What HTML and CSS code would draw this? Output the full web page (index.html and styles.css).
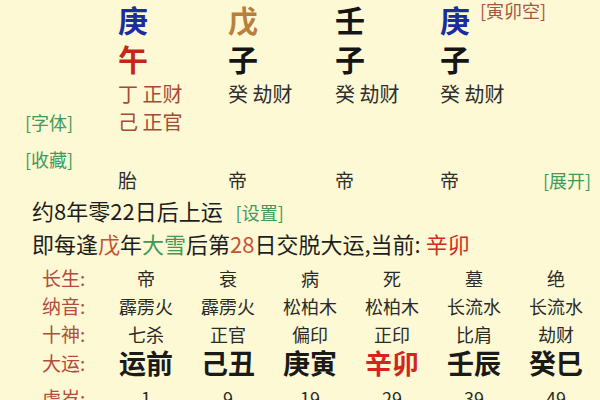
FILE: index.html
```html
<!DOCTYPE html>
<html lang="zh">
<head>
<meta charset="utf-8">
<link rel="stylesheet" href="styles.css">
</head>
<body>
<div class="page">
  <div class="pillars">
    <div class="row stems">
      <div class="side"></div>
      <div class="c blue">庚</div>
      <div class="c ochre">戊</div>
      <div class="c dark">壬</div>
      <div class="c blue">庚<span class="kong">[寅卯空]</span></div>
    </div>
    <div class="row branches">
      <div class="side"></div>
      <div class="c red">午</div>
      <div class="c dark">子</div>
      <div class="c dark">子</div>
      <div class="c dark">子</div>
    </div>
    <div class="row hid1">
      <div class="side"></div>
      <div class="c rust">丁 正财</div>
      <div class="c gray">癸 劫财</div>
      <div class="c gray">癸 劫财</div>
      <div class="c gray">癸 劫财</div>
    </div>
    <div class="row hid2">
      <div class="side link">[字体]</div>
      <div class="c rust">己 正官</div>
    </div>
    <div class="row fav">
      <div class="side link">[收藏]</div>
    </div>
    <div class="row stage">
      <div class="side"></div>
      <div class="c gray">胎</div>
      <div class="c gray">帝</div>
      <div class="c gray">帝</div>
      <div class="c gray">帝</div>
      <div class="c link">[展开]</div>
    </div>
  </div>

  <p class="info first">约8年零22日后上运 <span class="link set">[设置]</span></p>
  <p class="info second">即每逢<span class="orange">戊</span>年<span class="green">大雪</span>后第<span class="orange">28</span>日交脱大运,当前: <span class="cur">辛卯</span></p>

  <div class="table">
    <div class="t-row">
      <div class="lbl">长生:</div>
      <div class="v">帝</div><div class="v">衰</div><div class="v">病</div><div class="v">死</div><div class="v">墓</div><div class="v">绝</div>
    </div>
    <div class="t-row">
      <div class="lbl">纳音:</div>
      <div class="v">霹雳火</div><div class="v">霹雳火</div><div class="v">松柏木</div><div class="v">松柏木</div><div class="v">长流水</div><div class="v">长流水</div>
    </div>
    <div class="t-row">
      <div class="lbl">十神:</div>
      <div class="v">七杀</div><div class="v">正官</div><div class="v">偏印</div><div class="v">正印</div><div class="v">比肩</div><div class="v">劫财</div>
    </div>
    <div class="t-row luck">
      <div class="lbl">大运:</div>
      <div class="v big">运前</div><div class="v big">己丑</div><div class="v big">庚寅</div><div class="v big now">辛卯</div><div class="v big">壬辰</div><div class="v big">癸巳</div>
    </div>
    <div class="t-row age">
      <div class="lbl">虚岁:</div>
      <div class="v">1</div><div class="v">9</div><div class="v">19</div><div class="v">29</div><div class="v">39</div><div class="v">49</div>
    </div>
  </div>
</div>
</body>
</html>
```

FILE: styles.css
```css
html, body {
  margin: 0;
  padding: 0;
  background: #fdf9d4;
}

body {
  font-family: "Noto Sans CJK SC", "Noto Sans", sans-serif;
  color: #222;
  width: 600px;
  height: 400px;
  overflow: hidden;
}

.page {
  position: relative;
}

.row {
  display: grid;
  grid-template-columns: 118px 110px 107px 105px 103px 1fr;
  white-space: nowrap;
}

.side {
  padding-left: 25px;
}

.link {
  color: #3f9a5c;
  font-size: 18px;
}

.stems {
  font-size: 30px;
  line-height: 38px;
  font-weight: 700;
}

.branches {
  font-size: 30px;
  line-height: 39px;
  font-weight: 700;
  padding-top: 1px;
}

.kong {
  font-size: 18px;
  line-height: 20px;
  vertical-align: top;
  color: #a9543f;
  margin-left: 10px;
  font-weight: 400;
}

.blue { color: #1b2d9e; }
.ochre { color: #b7803c; }
.dark { color: #151515; }
.red { color: #c5261b; }
.rust { color: #a64a36; }
.gray { color: #2e2e2e; }

.hid1 {
  font-size: 20px;
  line-height: 32px;
}

.hid2 {
  font-size: 20px;
  line-height: 24px;
}

.hid2 .side {
  font-size: 18px;
}

.fav {
  padding-top: 14px;
  line-height: 22px;
}

.stage {
  font-size: 19px;
  line-height: 20px;
}

.stage .link {
  font-size: 18px;
}

.info {
  margin: 0;
  padding-left: 32px;
  font-size: 22px;
  line-height: 24px;
  color: #1e1e1e;
  white-space: nowrap;
}

.first {
  margin-top: 8px;
}

.second {
  margin-top: 7px;
}

.set {
  margin-left: 8px;
  font-size: 18px;
}

.orange { color: #c65234; }
.green { color: #3d9a55; }
.cur { color: #d12c20; }

.table {
  margin-top: 9px;
  padding-left: 42px;
}

.t-row {
  display: grid;
  grid-template-columns: 63px repeat(6, 82px);
  line-height: 28px;
  font-size: 18px;
  white-space: nowrap;
}

.lbl {
  color: #b24c3c;
  font-size: 19px;
}

.v {
  text-align: center;
  color: #2a2a2a;
}

.luck {
  line-height: 30px;
}

.big {
  font-size: 27px;
  font-weight: 700;
  color: #1a1a1a;
}

.big.now {
  color: #d1261d;
}

.age {
  margin-top: 7px;
  line-height: 26px;
}
```
